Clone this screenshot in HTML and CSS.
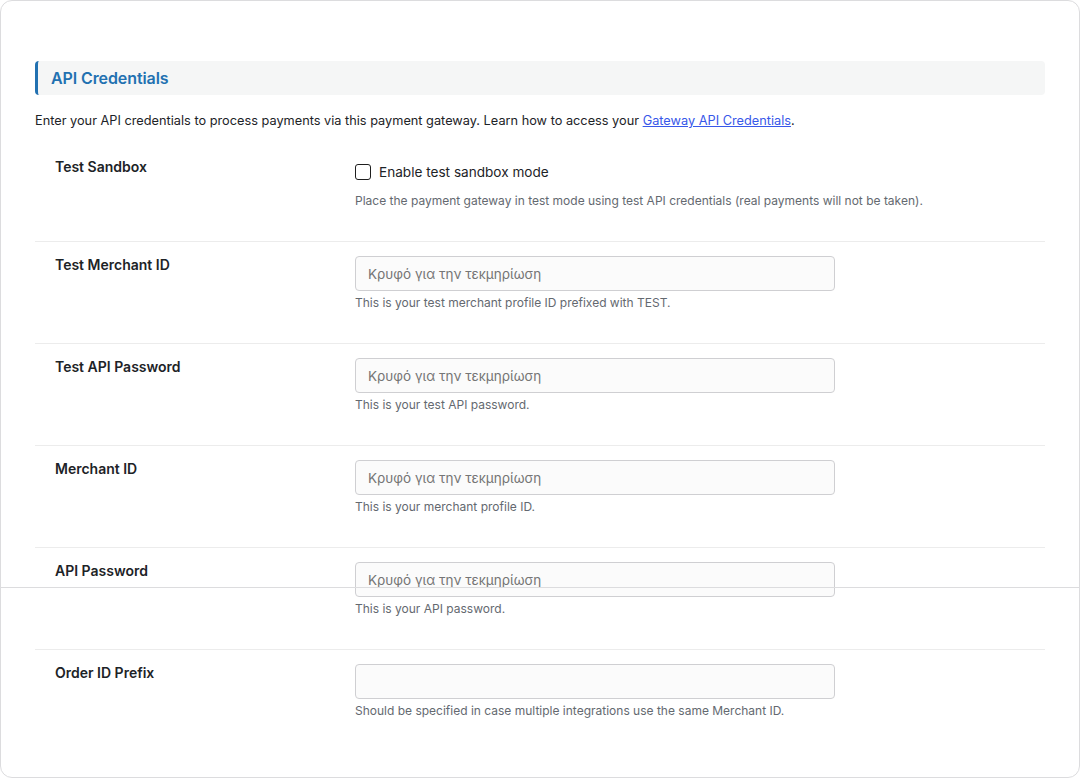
FILE: index.html
```html
<!DOCTYPE html>
<html lang="en">
<head>
<meta charset="utf-8">
<title>API Credentials</title>
<link rel="stylesheet" href="styles.css">
</head>
<body>
<div class="card">
  <h2 class="section-title">API Credentials</h2>
  <p class="intro">Enter your API credentials to process payments via this payment gateway. Learn how to access your <a href="#">Gateway API Credentials</a>.</p>

  <div class="rows">
    <div class="row">
      <div class="label">Test Sandbox</div>
      <div class="field">
        <label class="check"><span class="box"></span><span>Enable test sandbox mode</span></label>
        <p class="desc desc-check">Place the payment gateway in test mode using test API credentials (real payments will not be taken).</p>
      </div>
    </div>
    <div class="row">
      <div class="label">Test Merchant ID</div>
      <div class="field">
        <input class="input" type="text" placeholder="Κρυφό για την τεκμηρίωση">
        <p class="desc">This is your test merchant profile ID prefixed with TEST.</p>
      </div>
    </div>
    <div class="row">
      <div class="label">Test API Password</div>
      <div class="field">
        <input class="input" type="text" placeholder="Κρυφό για την τεκμηρίωση">
        <p class="desc">This is your test API password.</p>
      </div>
    </div>
    <div class="row">
      <div class="label">Merchant ID</div>
      <div class="field">
        <input class="input" type="text" placeholder="Κρυφό για την τεκμηρίωση">
        <p class="desc">This is your merchant profile ID.</p>
      </div>
    </div>
    <div class="row">
      <div class="label">API Password</div>
      <div class="field">
        <input class="input" type="text" placeholder="Κρυφό για την τεκμηρίωση">
        <p class="desc">This is your API password.</p>
      </div>
    </div>
    <div class="row">
      <div class="label">Order ID Prefix</div>
      <div class="field">
        <input class="input" type="text">
        <p class="desc">Should be specified in case multiple integrations use the same Merchant ID.</p>
      </div>
    </div>
  </div>
  <div class="fold-line"></div>
</div>
</body>
</html>
```

FILE: styles.css
```css
* { box-sizing: border-box; }
html, body { margin: 0; padding: 0; background: #ffffff; }
body {
  font-family: Inter, "Noto Sans", "DejaVu Sans", sans-serif;
  color: #1d2327;
  width: 1080px;
  height: 778px;
  overflow: hidden;
}
.card {
  position: relative;
  width: 1080px;
  height: 778px;
  border: 1px solid #dcdcde;
  border-radius: 12px;
  background: #fff;
  padding: 60px 34px 0 34px;
}
.section-title {
  margin: 0;
  height: 34px;
  display: flex;
  align-items: center;
  padding-left: 13px;
  background: #f5f6f6;
  border-left: 3px solid #2271b1;
  border-radius: 4px;
  color: #2271b1;
  font-size: 16px;
  font-weight: 600;
  letter-spacing: -0.1px;
}
.intro {
  margin: 17px 0 0 0;
  font-size: 12.75px;
  line-height: 18px;
  color: #1d2327;
}
.intro a { color: #3858e9; text-decoration: underline; }
.rows { margin-top: 14px; }
.row {
  display: flex;
  padding: 14px 0 31px 20px;
  border-bottom: 1px solid #ececec;
}
.row:first-child { padding-top: 14px; padding-bottom: 31px; }
.row:last-child { border-bottom: none; }
.label {
  width: 300px;
  flex: none;
  font-size: 14px;
  font-weight: 600;
  line-height: 18px;
}
.field { flex: 1; min-width: 0; }
.check {
  display: flex;
  align-items: center;
  gap: 8px;
  height: 20px;
  margin-top: 4px;
  font-size: 13.6px;
  color: #1d2327;
}
.box {
  width: 16px;
  height: 16px;
  border: 1.3px solid #1e1e1e;
  border-radius: 3px;
  background: #fff;
}
.input {
  display: block;
  width: 480px;
  height: 35px;
  margin: 0;
  padding: 0 12px;
  border: 1px solid #cfcfd2;
  border-radius: 4px;
  background: #fbfbfb;
  font-family: Inter, "Noto Sans", sans-serif;
  font-size: 13.5px;
  color: #1d2327;
  outline: none;
}
.input::placeholder { color: #757575; }
.desc {
  margin: 3px 0 0 0;
  font-size: 12px;
  line-height: 18px;
  color: #646970;
  white-space: nowrap;
}
.desc-check { margin-top: 10px; }
.fold-line {
  position: absolute;
  left: -1px;
  right: -1px;
  top: 586px;
  height: 1px;
  background: #dcdcde;
}
```
